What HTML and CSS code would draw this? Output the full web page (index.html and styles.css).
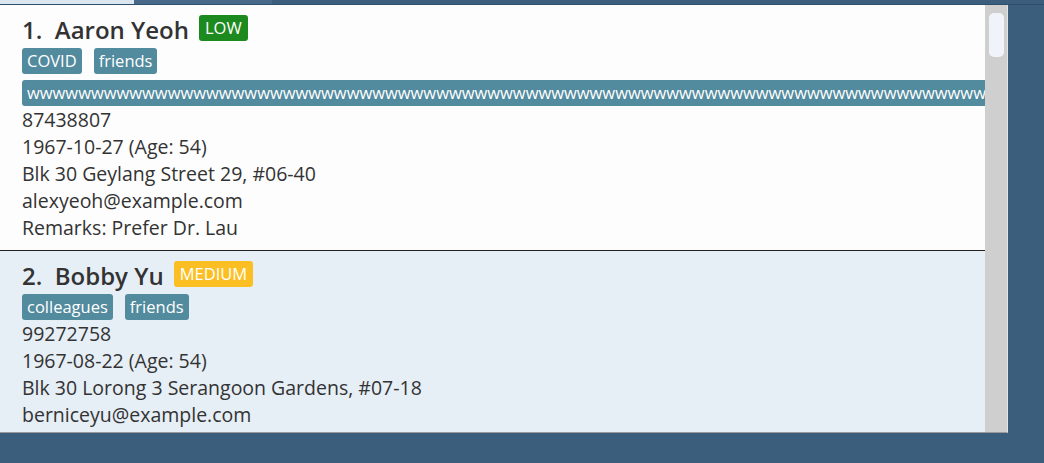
FILE: index.html
```html
<!DOCTYPE html>
<html>
<head>
<meta charset="utf-8">
<link rel="stylesheet" href="styles.css">
</head>
<body>
<div class="app">
  <div class="tabs">
    <div class="tab tab-active"></div>
    <div class="tab tab-mid"></div>
  </div>
  <div class="panel">
    <div class="list">
      <div class="card">
        <div class="name-row">
          <span class="name">1.&nbsp;&nbsp;Aaron Yeoh</span>
          <span class="badge badge-low">LOW</span>
        </div>
        <div class="tags">
          <span class="tag">COVID</span>
          <span class="tag">friends</span>
        </div>
        <div class="tags tags-last">
          <span class="tag tag-long">wwwwwwwwwwwwwwwwwwwwwwwwwwwwwwwwwwwwwwwwwwwwwwwwwwwwwwwwwwwwwwwwwwwwwwwwwwwwwwwwwwwwwwwwwwwwwwwwwwwwwwwwwwwwwwwwwwwwwwwwwwwwwwwwwwwwwwwwwwwwwwwwwwwwwwwww</span>
        </div>
        <div class="line">87438807</div>
        <div class="line">1967-10-27 (Age: 54)</div>
        <div class="line">Blk 30 Geylang Street 29, #06-40</div>
        <div class="line">alexyeoh@example.com</div>
        <div class="line">Remarks: Prefer Dr. Lau</div>
      </div>
      <div class="card card-alt">
        <div class="name-row">
          <span class="name">2.&nbsp;&nbsp;Bobby Yu</span>
          <span class="badge badge-medium">MEDIUM</span>
        </div>
        <div class="tags tags-last">
          <span class="tag">colleagues</span>
          <span class="tag">friends</span>
        </div>
        <div class="line">99272758</div>
        <div class="line">1967-08-22 (Age: 54)</div>
        <div class="line">Blk 30 Lorong 3 Serangoon Gardens, #07-18</div>
        <div class="line">berniceyu@example.com</div>
      </div>
    </div>
    <div class="scrollbar">
      <div class="thumb"></div>
    </div>
  </div>
</div>
</body>
</html>
```
FILE: styles.css
```css
html, body {
  margin: 0;
  padding: 0;
  background: #3b5e7c;
}
.app {
  width: 1044px;
  height: 463px;
  display: flex;
  flex-direction: column;
  font-family: "Open Sans", "Noto Sans", sans-serif;
}
.tabs {
  height: 4px;
  display: flex;
  border-bottom: 1px solid #2f4e68;
}
.tab-active {
  width: 134px;
  background: #dce6f0;
}
.tab-mid {
  width: 138px;
  background: #48698a;
}
.panel {
  width: 1008px;
  height: 428px;
  box-sizing: border-box;
  display: flex;
  border-right: 1px solid #e4e4e4;
  border-bottom: 1px solid #9a9a9a;
  background: #e6eef6;
}
.list {
  flex: 1;
  min-width: 0;
  overflow: hidden;
}
.card {
  background: #fdfdfd;
  padding: 10px 0 0 22px;
  height: 246px;
  box-sizing: border-box;
  border-bottom: 1px solid #222;
}
.card-alt {
  background: #e6eef6;
  border-bottom: none;
}
.name-row {
  display: flex;
  align-items: flex-start;
  gap: 10px;
  height: 26px;
  margin-bottom: 7px;
}
.name {
  font-size: 24px;
  line-height: 30px;
  font-weight: 600;
  color: #333;
  white-space: nowrap;
}
.badge {
  color: #fff;
  font-size: 16.5px;
  line-height: 26px;
  height: 26px;
  padding: 0 6px;
  border-radius: 3px;
}
.badge-low {
  background: #1c8a1e;
}
.badge-medium {
  background: #fbbf24;
}
.tags {
  display: flex;
  gap: 12px;
  margin-bottom: 6px;
  white-space: nowrap;
}
.tags-last {
  margin-bottom: 0;
}
.tag {
  flex: none;
  background: #528a9e;
  color: #fff;
  font-size: 16.5px;
  line-height: 26px;
  height: 26px;
  padding: 0 5px;
  border-radius: 3px;
}
.line {
  font-size: 19.5px;
  line-height: 27px;
  color: #333;
  white-space: nowrap;
}
.scrollbar {
  width: 22px;
  flex: none;
  background: #cfcfcf;
  padding: 8px 3px 0 4px;
  box-sizing: border-box;
}
.thumb {
  height: 44px;
  background: #f0f4fa;
  border-radius: 5px;
}
```
